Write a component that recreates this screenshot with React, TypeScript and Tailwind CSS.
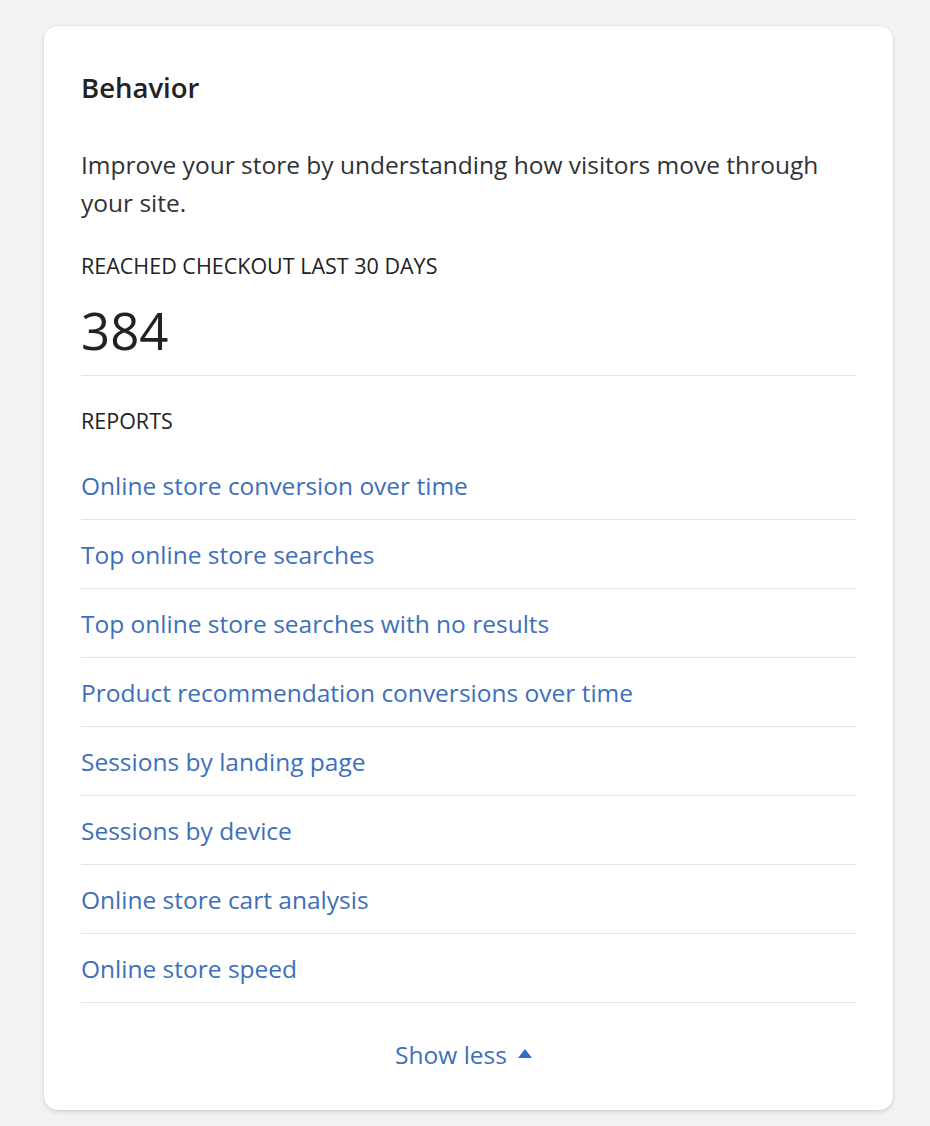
const reports = [
  'Online store conversion over time',
  'Top online store searches',
  'Top online store searches with no results',
  'Product recommendation conversions over time',
  'Sessions by landing page',
  'Sessions by device',
  'Online store cart analysis',
  'Online store speed',
];

export default function App() {
  return (
    <main
      className="min-h-screen w-full bg-[#f2f2f2] pt-[26px] pl-[44px]"
      style={{ fontFamily: '"Open Sans", "Noto Sans", sans-serif' }}
    >
      <section className="w-[849px] rounded-[14px] bg-white px-[37px] pt-[44px] pb-[39px] shadow-[0_0_0_1px_rgba(0,0,0,0.03),0_2px_4px_rgba(0,0,0,0.12)]">
        <h2 className="text-[27.5px] leading-[36px] font-semibold text-[#202223]">Behavior</h2>

        <p className="mt-[40px] text-[24.5px] leading-[38px] text-[#303233]">
          Improve your store by understanding how visitors move through your site.
        </p>

        <div className="border-b border-[#e3e3e3] pb-[17px]">
          <p className="mt-[30px] text-[21.5px] leading-[28px] font-medium text-[#202223]">
            REACHED CHECKOUT LAST 30 DAYS
          </p>
          <p className="mt-[22px] text-[51px] leading-[56px] text-[#202223]">384</p>
        </div>

        <p className="mt-[31px] text-[21.5px] leading-[28px] font-medium text-[#202223]">REPORTS</p>

        <ul className="mt-[16px] flex flex-col">
          {reports.map((report) => (
            <li key={report} className="flex h-[69px] items-center border-b border-[#e3e3e3]">
              <a href="#" className="mt-[2px] text-[24.5px] leading-[32px] text-[#3d6fbb]">
                {report}
              </a>
            </li>
          ))}
        </ul>

        <div className="mt-[36px] flex items-center justify-center gap-[11px] pr-[10px]">
          <span className="text-[24.5px] leading-[32px] text-[#3d6fbb]">Show less</span>
          <svg width="14" height="9" viewBox="0 0 14 9" className="mb-[4px]">
            <path d="M7 0 L14 9 L0 9 Z" fill="#2c6ecb" />
          </svg>
        </div>
      </section>
    </main>
  );
}
